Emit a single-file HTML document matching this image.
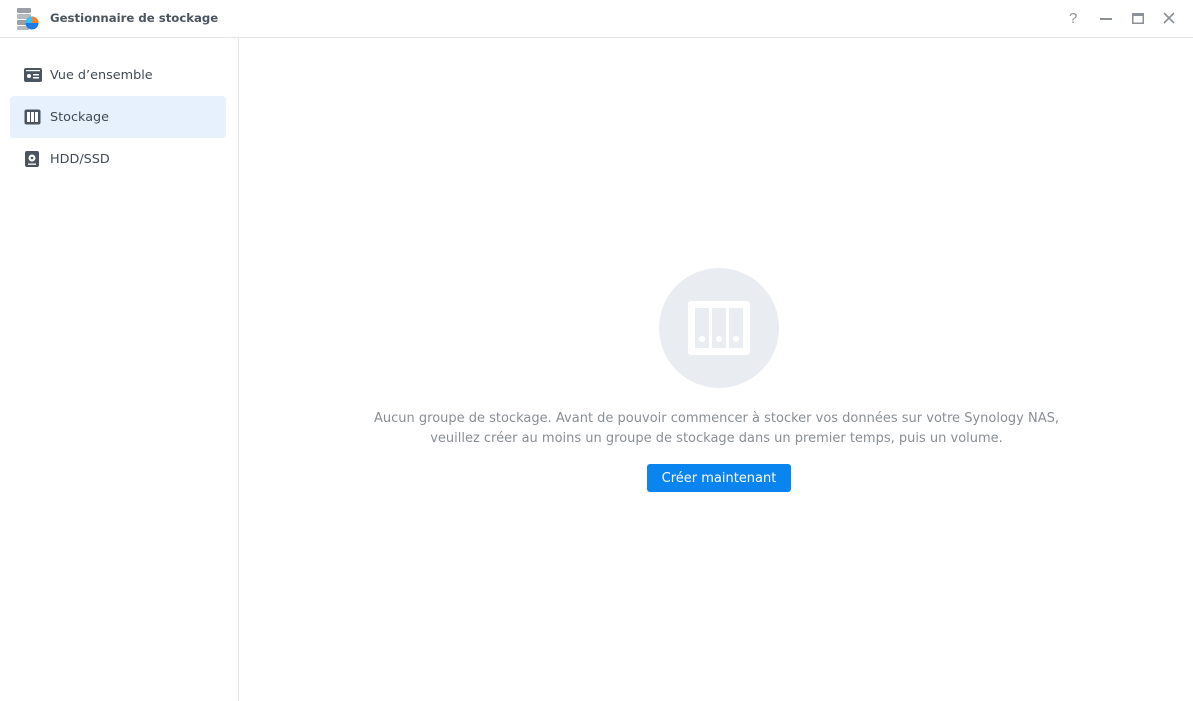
<!DOCTYPE html>
<html><head><meta charset="utf-8"><style>
*{margin:0;padding:0;box-sizing:border-box}
body{width:1193px;height:701px;background:#fff;font-family:"DejaVu Sans","Liberation Sans",sans-serif;position:relative;overflow:hidden;color:#414b55}
.top{position:absolute;left:0;top:0;width:1193px;height:38px;border-bottom:1px solid #e3e6ea}
.title{position:absolute;left:50px;top:11px;font-size:11.7px;font-weight:bold;color:#4a5560}
.side{position:absolute;left:0;top:38px;width:239px;height:663px;border-right:1px solid #e3e6ea}
.item{position:absolute;left:10px;width:216px;height:42px;border-radius:4px;font-size:12.8px;color:#414b55}
.item span{position:absolute;left:40px;top:14px}
.item svg{position:absolute;left:14px;top:13px}
.sel{background:#e6f1fd}
.msg{position:absolute;left:240px;width:953px;text-align:center;font-size:13px;color:#8a8f95;white-space:nowrap}
.btn{position:absolute;left:647px;top:464px;width:144px;height:28px;background:#0a84ee;border-radius:3px;color:#fff;font-size:13px;text-align:center;line-height:30px}
.ctl{position:absolute;top:10px;color:#8c9197;font-size:14px}
</style></head><body>
<div class="top">
<svg style="position:absolute;left:16px;top:7px" width="24" height="24" viewBox="0 0 24 24">
<rect x="1" y="1" width="14" height="5" rx="1" fill="#9aa0a6"/><rect x="1" y="7" width="14" height="5" rx="1" fill="#b5babf"/><rect x="1" y="13" width="14" height="5" rx="1" fill="#9aa0a6"/><rect x="1" y="19" width="12" height="4" rx="1" fill="#b5babf"/>
<circle cx="16" cy="16" r="6.5" fill="#1e7be8"/><path d="M16 16 L16 9.5 A6.5 6.5 0 0 1 22.5 16Z" fill="#f5822a"/><path d="M16 16 L9.5 16 A6.5 6.5 0 0 1 16 9.5Z" fill="#3cc0f0"/>
</svg>
<div class="title">Gestionnaire de stockage</div>
<div class="ctl" style="left:1069px;font-family:'Liberation Sans',sans-serif;font-size:15px">?</div>
<svg style="position:absolute;left:1100px;top:12px" width="14" height="14"><rect x="0" y="6" width="12" height="2" fill="#8c9197"/></svg>
<svg style="position:absolute;left:1132px;top:12px" width="14" height="14"><rect x="0.75" y="1.75" width="10.5" height="9.5" fill="none" stroke="#8c9197" stroke-width="1.5"/><rect x="0" y="1" width="12" height="3" fill="#8c9197"/></svg>
<svg style="position:absolute;left:1163px;top:12px" width="14" height="14"><path d="M1 1L11 11M11 1L1 11" stroke="#8c9197" stroke-width="1.6"/></svg>
</div>
<div class="side">
<div class="item" style="top:16px"><svg width="18" height="16" viewBox="0 0 18 16"><rect x="0" y="1" width="18" height="14" rx="2" fill="#4a5560"/><circle cx="5" cy="9" r="2" fill="#fff"/><rect x="9" y="7" width="6" height="1.5" fill="#fff"/><rect x="9" y="10" width="6" height="1.5" fill="#fff"/><rect x="2" y="3" width="14" height="1.2" fill="#fff"/></svg><span>Vue d’ensemble</span></div>
<div class="item sel" style="top:58px"><svg width="18" height="16" viewBox="0 0 18 16"><rect x="0.5" y="0.5" width="16" height="15" rx="2" fill="#4a5560"/><rect x="3" y="3" width="3" height="10" fill="#fff"/><rect x="7" y="3" width="3" height="10" fill="#fff"/><rect x="11" y="3" width="3" height="10" fill="#fff"/></svg><span>Stockage</span></div>
<div class="item" style="top:100px"><svg width="18" height="16" viewBox="0 0 18 16"><rect x="1" y="0" width="14" height="16" rx="2" fill="#4a5560"/><circle cx="8" cy="7" r="3.5" fill="#fff"/><circle cx="8" cy="7" r="1.3" fill="#4a5560"/><rect x="4" y="12.5" width="8" height="1.3" fill="#fff"/></svg><span>HDD/SSD</span></div>
</div>
<svg style="position:absolute;left:659px;top:268px" width="120" height="120" viewBox="0 0 120 120">
<circle cx="60" cy="60" r="60" fill="#e9edf1"/>
<rect x="29" y="33" width="62" height="54" rx="3" fill="#fff"/>
<rect x="36" y="40" width="14" height="40" fill="#e9edf1"/><rect x="53" y="40" width="14" height="40" fill="#e9edf1"/><rect x="70" y="40" width="14" height="40" fill="#e9edf1"/>
<circle cx="43" cy="71" r="3" fill="#fff"/><circle cx="60" cy="71" r="3" fill="#fff"/><circle cx="77" cy="71" r="3" fill="#fff"/>
</svg>
<div class="msg" style="top:411px">Aucun groupe de stockage. Avant de pouvoir commencer à stocker vos données sur votre Synology NAS,</div>
<div class="msg" style="top:431px">veuillez créer au moins un groupe de stockage dans un premier temps, puis un volume.</div>
<div class="btn">Créer maintenant</div>
</body></html>
